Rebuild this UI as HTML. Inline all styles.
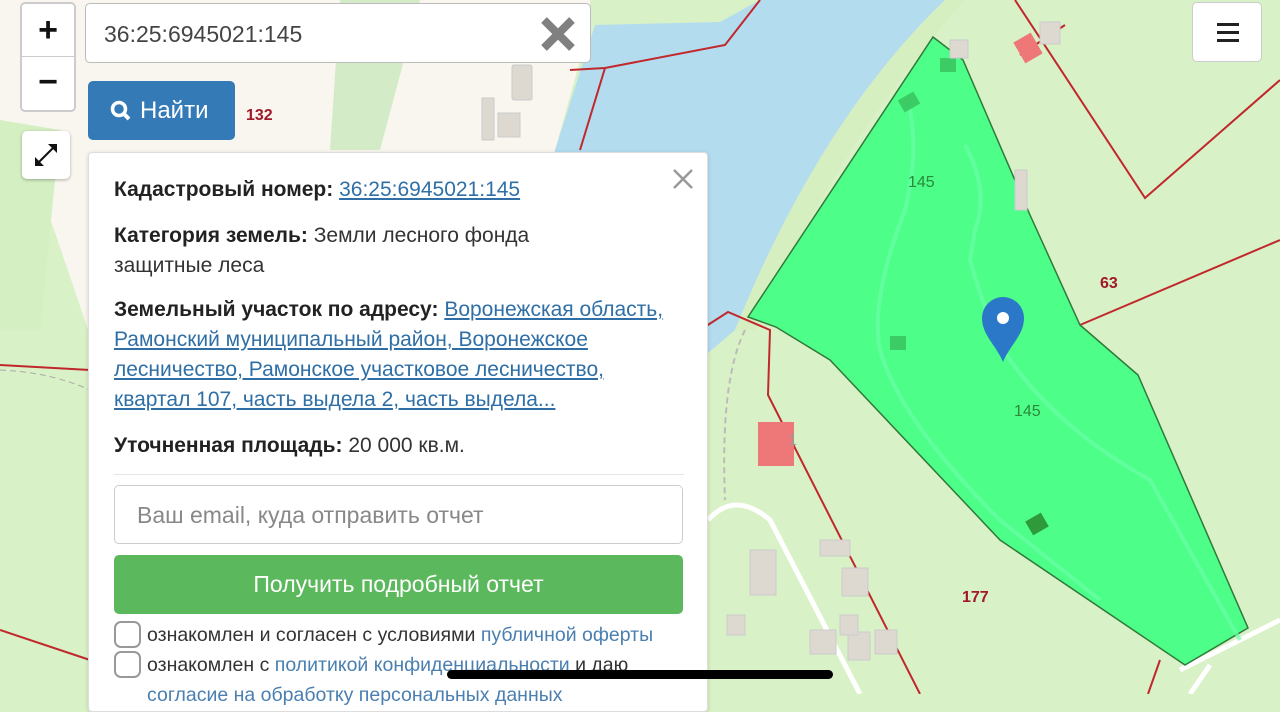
<!DOCTYPE html>
<html><head><meta charset="utf-8"><style>
*{box-sizing:border-box}
body{margin:0;width:1280px;height:694px;overflow:hidden;position:relative;font-family:"Liberation Sans",sans-serif;background:#d9f1c6}
svg.map{position:absolute;left:0;top:0}
.ctl{position:absolute;background:#fff;border:2px solid #ccc;border-radius:5px}
.panel{position:absolute;left:88px;top:152px;width:620px;height:560px;background:#fff;border:1px solid #ddd;border-radius:4px;box-shadow:0 1px 4px rgba(0,0,0,.15)}
.p{position:absolute;left:25px;font-size:21px;color:#333;line-height:30px}
.p b{color:#222}
.p a{color:#2f6fa6;text-decoration:underline}
</style></head><body>
<svg class="map" width="1280" height="694" viewBox="0 0 1280 694">
<rect width="1280" height="694" fill="#d9f1c6"/>
<polygon points="0,0 590,0 590,25 555,150 520,350 95,350 20,130 0,120" fill="#f8f6ee"/>
<polygon points="0,120 60,130 40,330 0,330" fill="#d4efc2"/>
<polygon points="340,0 420,0 380,150 330,150" fill="#d4ebc8"/>
<path d="M595,25 L720,22 L760,0 L945,0 Q820,120 735,330 L700,360 L555,360 L555,150 Z" fill="#b4dcef"/>
<path d="M945,0 L965,0 Q840,140 755,330 L735,330 Q820,120 945,0 Z" fill="#d6efc0"/>
<g stroke="#c0282d" stroke-width="2" fill="none">
<path d="M570,70 L605,68 L725,45 L760,0"/>
<path d="M605,68 L580,150"/>
<path d="M1015,0 L1145,198 L1280,80"/>
<path d="M1080,325 L1280,240"/>
<path d="M700,330 L728,312 L770,330 L768,395 L920,694"/>
<path d="M0,365 L90,370"/>
<path d="M0,630 L90,660"/>
<path d="M1148,694 L1160,660"/>
<path d="M1020,55 L1065,25"/>
</g>
<path d="M0,370 Q50,372 90,390" stroke="#aaa" stroke-dasharray="6,4" fill="none"/>
<path d="M745,330 Q720,380 725,500" stroke="#bbb" stroke-width="2" stroke-dasharray="6,4" fill="none"/>
<path d="M708,520 Q735,490 770,520 L860,694" stroke="#fff" stroke-width="5" fill="none"/>
<path d="M1180,670 L1280,620 M1190,694 L1210,665" stroke="#fff" stroke-width="5" fill="none"/>
<polygon points="933,37 963,60 1030,215 1080,325 1138,375 1248,628 1185,665 1000,540 830,360 776,327 748,317" fill="#4dff88" stroke="#2f7a3a" stroke-width="1.5"/>
<path d="M908,100 Q920,150 905,210 Q870,300 880,350 Q900,420 1000,520 L1100,600" stroke="#6affa8" stroke-width="4" fill="none" opacity=".7"/>
<path d="M965,145 Q990,190 975,230 L970,260 Q990,330 1010,360 Q1060,430 1150,480 L1240,640" stroke="#6affa8" stroke-width="4" fill="none" opacity=".7"/>
<rect x="900" y="95" width="18" height="14" fill="#3bcc66" transform="rotate(-30 909 102)"/>
<rect x="940" y="58" width="16" height="14" fill="#3bcc66"/>
<rect x="890" y="336" width="16" height="14" fill="#3bcc66"/>
<rect x="1028" y="516" width="18" height="16" fill="#2f9a3a" transform="rotate(-30 1037 524)"/>
<g fill="#ddd9d0" stroke="#ccc"><rect x="512" y="65" width="20" height="35" rx="2"/><rect x="498" y="113" width="22" height="24"/><rect x="482" y="98" width="12" height="42"/><rect x="950" y="40" width="18" height="18"/><rect x="1040" y="22" width="20" height="22"/><rect x="1015" y="170" width="12" height="40"/><rect x="750" y="550" width="26" height="45"/><rect x="820" y="540" width="30" height="16"/><rect x="842" y="568" width="26" height="28"/><rect x="727" y="615" width="18" height="20"/><rect x="810" y="630" width="26" height="24"/><rect x="848" y="632" width="22" height="28"/><rect x="875" y="630" width="22" height="24"/><rect x="840" y="615" width="18" height="20"/></g>
<rect x="1018" y="36" width="20" height="24" fill="#e77" transform="rotate(-30 1028 48)"/>
<rect x="758" y="422" width="36" height="44" fill="#e77"/>
<g font-family="Liberation Sans" font-size="16"><text x="908" y="187" fill="#2a8a3a">145</text><text x="1014" y="416" fill="#2a8a3a">145</text>
<text x="1100" y="288" fill="#a0182a" font-weight="bold">63</text><text x="962" y="602" fill="#a0182a" font-weight="bold">177</text><text x="246" y="120" fill="#a0182a" font-weight="bold">132</text><text x="788" y="445" fill="#999">1</text></g>
<path d="M1003,362 C996,345 982,335 982,318 A21,21 0 0 1 1024,318 C1024,335 1010,345 1003,362 Z" fill="#2b78c8"/>
<circle cx="1003" cy="318" r="6" fill="#fff"/>
</svg>
<div class="ctl" style="left:20px;top:2px;width:56px;height:110px"></div>
<div style="position:absolute;left:22px;top:56px;width:52px;height:1px;background:#ccc"></div>
<div style="position:absolute;left:22px;top:10px;width:52px;text-align:center;font-size:34px;font-weight:bold;color:#111;line-height:40px">+</div>
<div style="position:absolute;left:22px;top:62px;width:52px;text-align:center;font-size:34px;font-weight:bold;color:#111;line-height:40px">−</div>
<div class="ctl" style="left:22px;top:131px;width:48px;height:48px;border:none;box-shadow:0 1px 3px rgba(0,0,0,.3)">
<svg width="48" height="48"><path d="M16,32 L32,16" stroke="#111" stroke-width="2"/><path d="M26,13 L35,13 L35,22 Z M13,26 L13,35 L22,35 Z" fill="#111"/></svg></div>
<div style="position:absolute;left:85px;top:3px;width:506px;height:60px;background:#fff;border:1px solid #bbb;border-radius:5px;font-size:23px;color:#444;padding:17px 0 0 18px">36:25:6945021:145
<svg style="position:absolute;right:14px;top:12px" width="36" height="36"><path d="M4,4 L32,32 M32,4 L4,32" stroke="#808080" stroke-width="8"/></svg></div>
<div style="position:absolute;left:88px;top:81px;width:147px;height:59px;background:#337ab7;border-radius:5px;color:#fff;font-size:24px;padding:16px 0 0 22px">
<svg style="position:absolute;left:22px;top:19px" width="22" height="22"><circle cx="9" cy="9" r="6.5" stroke="#fff" stroke-width="3.5" fill="none"/><path d="M13.5,13.5 L19,19" stroke="#fff" stroke-width="4"/></svg><span style="margin-left:30px">Найти</span></div>
<div class="ctl" style="left:1192px;top:2px;width:70px;height:60px;border:1px solid #ccc"><div style="position:absolute;left:24px;top:20px;width:22px;height:3px;background:#222;box-shadow:0 8px 0 #222,0 16px 0 #222"></div></div>
<div class="panel">
<svg style="position:absolute;left:583px;top:15px" width="22" height="22"><path d="M2,2 L20,20 M20,2 L2,20" stroke="#999" stroke-width="2.5"/></svg>
<div class="p" style="top:22px"><b>Кадастровый номер:</b> <a>36:25:6945021:145</a></div>
<div class="p" style="top:68px"><b>Категория земель:</b> Земли лесного фонда<br>защитные леса</div>
<div class="p" style="top:142px;width:575px"><b>Земельный участок по адресу:</b> <a>Воронежская область,</a><br><a>Рамонский муниципальный район, Воронежское</a><br><a>лесничество, Рамонское участковое лесничество,</a><br><a>квартал 107, часть выдела 2, часть выдела...</a></div>
<div class="p" style="top:278px"><b>Уточненная площадь:</b> 20 000 кв.м.</div>
<div style="position:absolute;left:25px;top:321px;width:570px;height:1px;background:#e5e5e5"></div>
<div style="position:absolute;left:25px;top:332px;width:569px;height:59px;border:1px solid #ccc;border-radius:5px;font-size:23px;color:#888;padding:16px 0 0 22px">Ваш email, куда отправить отчет</div>
<div style="position:absolute;left:25px;top:402px;width:569px;height:59px;background:#5cb85c;border-radius:5px;font-size:23px;color:#fff;text-align:center;line-height:59px">Получить подробный отчет</div>
<div style="position:absolute;left:25px;top:468px;width:27px;height:27px;border:2px solid #999;border-radius:7px"></div>
<div style="position:absolute;left:25px;top:498px;width:27px;height:27px;border:2px solid #999;border-radius:7px"></div>
<div style="position:absolute;left:58px;top:467px;font-size:19.5px;color:#333;line-height:30px;white-space:nowrap">ознакомлен и согласен с условиями <span style="color:#4a7fb0">публичной оферты</span><br>ознакомлен с <span style="color:#4a7fb0">политикой конфиденциальности</span> и даю<br><span style="color:#4a7fb0">согласие на обработку персональных данных</span></div>
</div>
<div style="position:absolute;left:447px;top:670px;width:386px;height:9px;background:#000;border-radius:5px"></div>
</body></html>
